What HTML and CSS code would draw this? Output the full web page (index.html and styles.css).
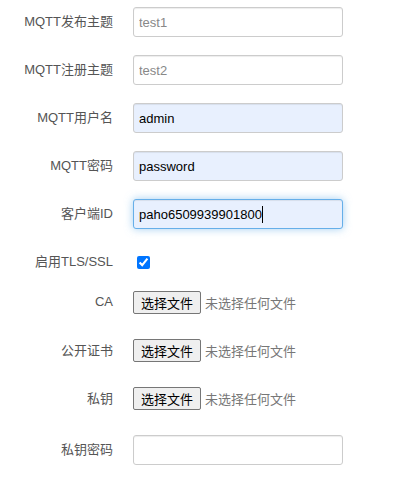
FILE: index.html
```html
<!DOCTYPE html>
<html lang="zh-CN">
<head>
    <meta charset="UTF-8">
    <title>MQTT设置</title>
    <link rel="stylesheet" href="styles.css">
</head>
<body>
<form class="settings">
    <div class="row">
        <label class="name">MQTT发布主题</label>
        <input class="text" type="text" placeholder="test1">
    </div>
    <div class="row">
        <label class="name">MQTT注册主题</label>
        <input class="text" type="text" placeholder="test2">
    </div>
    <div class="row">
        <label class="name">MQTT用户名</label>
        <input class="text filled" type="text" value="admin">
    </div>
    <div class="row">
        <label class="name">MQTT密码</label>
        <input class="text filled" type="text" value="password">
    </div>
    <div class="row">
        <label class="name">客户端ID</label>
        <div class="text filled focus">paho6509939901800<span class="caret"></span></div>
    </div>
    <div class="row row-check">
        <label class="name">启用TLS/SSL</label>
        <input class="check" type="checkbox" checked>
    </div>
    <div class="row row-file">
        <label class="name">CA</label>
        <button class="file-btn" type="button">选择文件</button>
        <span class="file-none">未选择任何文件</span>
    </div>
    <div class="row row-file">
        <label class="name">公开证书</label>
        <button class="file-btn" type="button">选择文件</button>
        <span class="file-none">未选择任何文件</span>
    </div>
    <div class="row row-file">
        <label class="name">私钥</label>
        <button class="file-btn" type="button">选择文件</button>
        <span class="file-none">未选择任何文件</span>
    </div>
    <div class="row">
        <label class="name">私钥密码</label>
        <input class="text" type="password">
    </div>
</form>
</body>
</html>
```

FILE: styles.css
```css
*{margin: 0;padding: 0;box-sizing: border-box;}
body {
    background: #fff;
    font-family: "Liberation Sans", Arial, "Noto Sans CJK SC", sans-serif;
    font-size: 13px;
    color: #555;
}
.settings {
    padding-top: 7px;
}
.row {
    display: flex;
    align-items: center;
    height: 30px;
    margin-bottom: 18px;
}
.row .name {
    width: 113px;
    margin-right: 20px;
    padding-bottom: 3px; /* CJK字体基线偏低，往上提一点 */
    text-align: right;
    color: #555;
}
/*========text input========*/
.text {
    width: 210px;
    height: 30px;
    padding: 0 5px;
    border: 1px solid #ccc;
    border-radius: 3px;
    background: #fff;
    font-family: "Liberation Sans", Arial, sans-serif;
    font-size: 13px;
    color: #000;
    outline: none;
    box-shadow: inset 0 1px 1px rgba(0,0,0,.075);
}
.text::placeholder {
    color: #888;
}
.text.filled {
    background: #e8f0fe;
}
.text.focus {
    display: flex;
    align-items: center;
    border-color: #66afe9;
    box-shadow: inset 0 1px 1px rgba(0,0,0,.075), 0 0 8px rgba(102,175,233,.6);
}
.caret {
    display: inline-block;
    width: 1px;
    height: 17px;
    background: #000;
}
/*========checkbox========*/
.check {
    width: 13px;
    height: 13px;
    margin-left: 4px;
}
.row-check {
    margin-bottom: 14px;
}
/*========file========*/
.row-file {
    height: 23px;
    margin-bottom: 25px;
}
.file-btn {
    height: 23px;
    padding: 0 7px;
    border: 1px solid #767676;
    border-radius: 2px;
    background: #efefef;
    font-family: "Liberation Sans", Arial, "Noto Sans CJK SC", sans-serif;
    font-size: 13px;
    color: #000;
}
.file-none {
    margin-left: 4px;
    color: #777;
}
```
